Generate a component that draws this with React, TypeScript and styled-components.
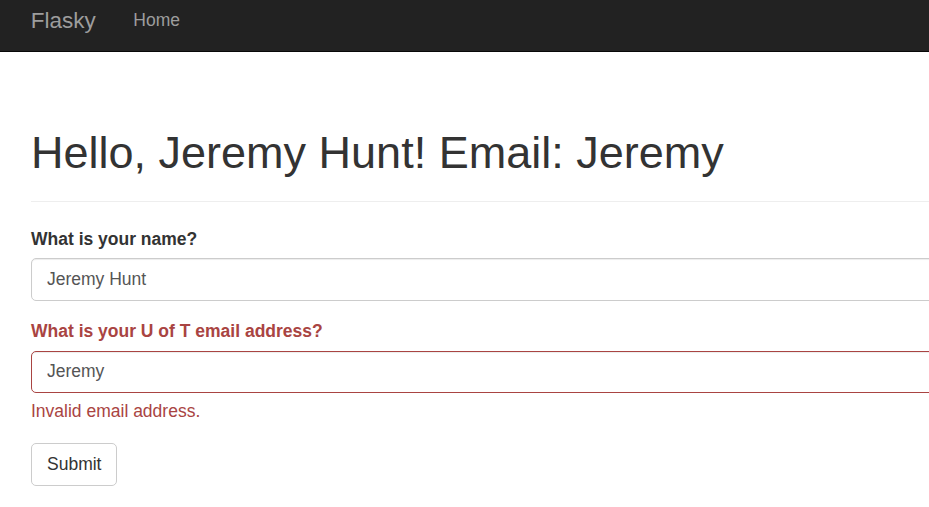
import React from "react";
import styled, { createGlobalStyle } from "styled-components";

const GlobalStyle = createGlobalStyle`
  html, body {
    margin: 0;
    padding: 0;
    overflow: hidden;
    background: #fff;
  }
  body {
    font-family: "Liberation Sans", Arial, Helvetica, sans-serif;
    font-size: 17.5px;
    line-height: 25px;
    color: #333;
  }
  * { box-sizing: border-box; }
`;

const Navbar = styled.nav`
  height: 52px;
  background: #222;
  border-bottom: 1px solid #080808;
  display: flex;
  align-items: flex-start;
  padding-left: 12px;
`;

const Brand = styled.a`
  display: block;
  padding: 7.5px 18.75px 0;
  font-size: 22.5px;
  line-height: 25px;
  color: #9d9d9d;
  text-decoration: none;
`;

const NavLink = styled.a`
  display: block;
  padding: 7.75px 18.75px 0;
  font-size: 17.5px;
  line-height: 25px;
  color: #9d9d9d;
  text-decoration: none;
`;

const Container = styled.main`
  width: 1400px;
  padding: 75.5px 0 0 31px;
`;

const PageHeader = styled.div`
  padding-bottom: 11.25px;
  margin-bottom: 25px;
  border-bottom: 1px solid #eee;
`;

const Title = styled.h1`
  margin: 0 0 12.5px;
  font-size: 45px;
  line-height: 49.5px;
  font-weight: 500;
  color: #333;
`;

const Form = styled.form`
  display: flex;
  flex-direction: column;
`;

const FormGroup = styled.div`
  display: flex;
  flex-direction: column;
  align-items: flex-start;
  margin-bottom: 18.75px;
`;

const Label = styled.label<{ $error?: boolean }>`
  display: block;
  margin-bottom: 6.25px;
  font-weight: bold;
  font-size: 17.5px;
  line-height: 25px;
  color: ${(p) => (p.$error ? "#a94442" : "#333")};
`;

const Input = styled.input<{ $error?: boolean }>`
  width: 100%;
  height: 42.5px;
  padding: 7.5px 15px;
  font-family: inherit;
  font-size: 17.5px;
  line-height: 25px;
  color: #555;
  background: #fff;
  border: 1px solid ${(p) => (p.$error ? "#a94442" : "#ccc")};
  border-radius: 5px;
  box-shadow: inset 0 1px 1px rgba(0, 0, 0, 0.075);
  outline: none;
  &:hover,
  &:focus {
    border-color: ${(p) => (p.$error ? "#a94442" : "#ccc")};
    outline: none;
  }
`;

const HelpBlock = styled.p`
  margin: 6.25px 0 0;
  font-size: 17.5px;
  line-height: 25px;
  color: #a94442;
`;

const Button = styled.button`
  align-self: flex-start;
  height: 42.5px;
  padding: 7.5px 15px;
  font-family: inherit;
  font-size: 17.5px;
  line-height: 25px;
  color: #333;
  background: #fff;
  border: 1px solid #ccc;
  border-radius: 5px;
  cursor: pointer;
`;

export default function App() {
  return (
    <>
      <GlobalStyle />
      <Navbar>
        <Brand href="#">Flasky</Brand>
        <NavLink href="#">Home</NavLink>
      </Navbar>
      <Container>
        <PageHeader>
          <Title>Hello, Jeremy Hunt! Email: Jeremy</Title>
        </PageHeader>
        <Form onSubmit={(e) => e.preventDefault()}>
          <FormGroup>
            <Label htmlFor="name">What is your name?</Label>
            <Input id="name" defaultValue="Jeremy Hunt" />
          </FormGroup>
          <FormGroup>
            <Label $error htmlFor="email">What is your U of T email address?</Label>
            <Input $error id="email" defaultValue="Jeremy" />
            <HelpBlock>Invalid email address.</HelpBlock>
          </FormGroup>
          <Button type="submit">Submit</Button>
        </Form>
      </Container>
    </>
  );
}
